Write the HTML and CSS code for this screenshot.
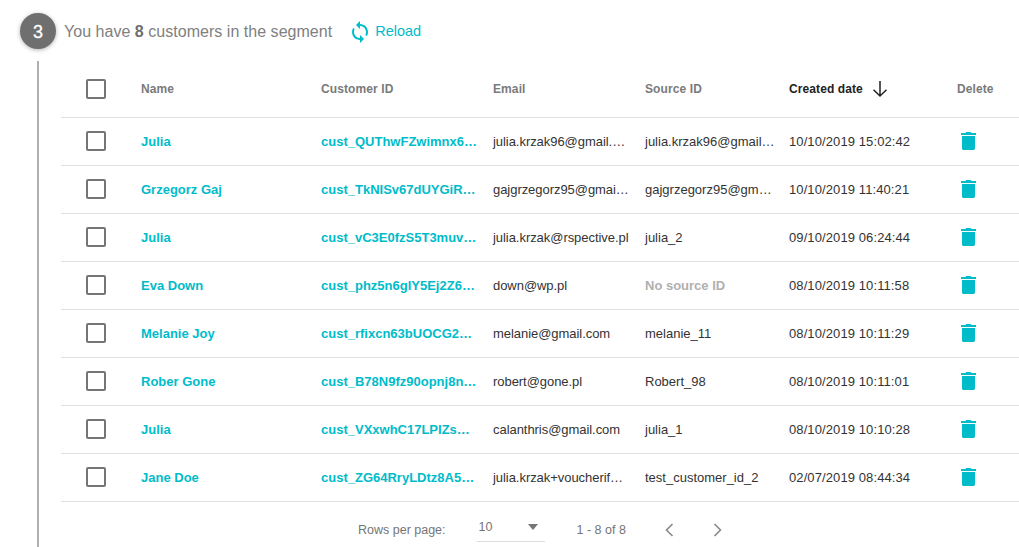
FILE: index.html
```html
<!DOCTYPE html>
<html lang="en">
<head>
    <meta charset="UTF-8">
    <title>Customers in the segment</title>
    <link rel="stylesheet" href="styles.css">
</head>
<body>
    <div class="step-header">
        <div class="step-number">3</div>
        <div class="step-title">You have <b>8</b> customers in the segment</div>
        <a class="reload">
            <svg width="24" height="24" viewBox="0 0 24 24"><path d="M12 4V1L8 5l4 4V6c3.31 0 6 2.69 6 6 0 1.010-.25 1.970-.7 2.800l1.460 1.460C19.540 15.030 20 13.570 20 12c0-4.420-3.580-8-8-8zm0 14c-3.310 0-6-2.690-6-6 0-1.010.25-1.970.7-2.800L5.240 7.740C4.460 8.970 4 10.430 4 12c0 4.420 3.580 8 8 8v3l4-4-4-4v3z"/></svg>
            Reload
        </a>
    </div>
    <div class="step-body">
        <table class="customers">
            <colgroup>
                <col class="col-check"><col class="col-name"><col class="col-id"><col class="col-email"><col class="col-source"><col class="col-date"><col class="col-delete">
            </colgroup>
            <thead>
                <tr>
                    <th class="check-cell"><span class="checkbox"></span></th>
                    <th>Name</th>
                    <th>Customer ID</th>
                    <th>Email</th>
                    <th>Source ID</th>
                    <th class="sorted">
                        <span class="sort-label">Created date
                            <svg width="18" height="18" viewBox="0 0 18 18"><path d="M9 1v15M2.500 9.700 9 16l6.500-6.300" fill="none" stroke="#222" stroke-width="1.500"/></svg>
                        </span>
                    </th>
                    <th>Delete</th>
                </tr>
            </thead>
            <tbody id="rows"></tbody>
        </table>
        <div class="pagination">
            <span class="rows-label">Rows per page:</span>
            <div class="rows-select"><span>10</span><i class="caret"></i></div>
            <span class="range">1 - 8 of 8</span>
            <svg class="page-arrow" width="12" height="14" viewBox="0 0 12 14"><path d="M8.500 1l-6 6 6 6" fill="none" stroke="#888" stroke-width="1.600"/></svg>
            <svg class="page-arrow next" width="12" height="14" viewBox="0 0 12 14"><path d="M3.500 1l6 6-6 6" fill="none" stroke="#888" stroke-width="1.600"/></svg>
        </div>
    </div>

    <script>
        const customers = [
            ['Julia', 'cust_QUThwFZwimnx6…', 'julia.krzak96@gmail.…', 'julia.krzak96@gmail…', '10/10/2019 15:02:42'],
            ['Grzegorz Gaj', 'cust_TkNISv67dUYGiR…', 'gajgrzegorz95@gmai…', 'gajgrzegorz95@gm…', '10/10/2019 11:40:21'],
            ['Julia', 'cust_vC3E0fzS5T3muv…', 'julia.krzak@rspective.pl', 'julia_2', '09/10/2019 06:24:44'],
            ['Eva Down', 'cust_phz5n6glY5Ej2Z6…', 'down@wp.pl', '', '08/10/2019 10:11:58'],
            ['Melanie Joy', 'cust_rfixcn63bUOCG2…', 'melanie@gmail.com', 'melanie_11', '08/10/2019 10:11:29'],
            ['Rober Gone', 'cust_B78N9fz90opnj8n…', 'robert@gone.pl', 'Robert_98', '08/10/2019 10:11:01'],
            ['Julia', 'cust_VXxwhC17LPIZs…', 'calanthris@gmail.com', 'julia_1', '08/10/2019 10:10:28'],
            ['Jane Doe', 'cust_ZG64RryLDtz8A5…', 'julia.krzak+voucherif…', 'test_customer_id_2', '02/07/2019 08:44:34']
        ];
        const trash = '<svg width="15" height="18" viewBox="0 0 15 18"><path d="M5 0h5l.5 1H15v2H0V1h4.500zM1 4h13v12.200c0 1-.8 1.800-1.800 1.800H2.800C1.800 18 1 17.200 1 16.200z"/></svg>';

        document.getElementById('rows').innerHTML = customers.map(function (c) {
            const source = c[3] ? c[3] : '<span class="no-source">No source ID</span>';
            return '<tr><td class="check-cell"><span class="checkbox"></span></td>' +
                '<td class="link">' + c[0] + '</td>' +
                '<td class="link">' + c[1] + '</td>' +
                '<td class="email">' + c[2] + '</td>' +
                '<td>' + source + '</td>' +
                '<td class="date">' + c[4] + '</td>' +
                '<td class="delete-cell">' + trash + '</td></tr>';
        }).join('');
    </script>
</body>
</html>
```

FILE: styles.css
```css
body {
    font-family: "Liberation Sans", Arial, sans-serif;
    margin: 0;
    background-color: #fff;
    color: #333;
    overflow: hidden;
}
.step-header {
    display: flex;
    align-items: center;
    height: 36px;
    padding: 13px 0 0 20px;
}
.step-number {
    width: 36px;
    height: 36px;
    border-radius: 50%;
    background-color: #6f6f6f;
    color: #fff;
    font-size: 18px;
    line-height: 38px;
    text-align: center;
    -webkit-text-stroke: 0.3px #fff;
    box-shadow: 0 1px 4px rgba(0,0,0,0.3);
}
.step-title {
    margin: 1px 0 0 8px;
    font-size: 16px;
    letter-spacing: 0.03px;
    color: #808080;
}
.step-title b {
    color: #6f6f6f;
}
.reload {
    display: flex;
    align-items: center;
    gap: 3px;
    margin-left: 16px;
    font-size: 14.5px;
    color: #00bcca;
}
.reload svg {
    margin-top: 2px;
    fill: #00bcca;
}
.step-body {
    margin: 12px 0 0 37px;
    padding-left: 22px;
    border-left: 2px solid #b0b0b0;
    height: 486px;
}
.customers {
    width: 958px;
    table-layout: fixed;
    border-collapse: collapse;
}
.col-check { width: 80px; }
.col-name { width: 180px; }
.col-id { width: 172px; }
.col-email { width: 152px; }
.col-source { width: 144px; }
.col-date { width: 168px; }
.col-delete { width: 62px; }
th, td {
    padding: 0;
    border-bottom: 1px solid #e0e0e0;
    font-size: 13px;
    text-align: left;
    white-space: nowrap;
}
thead tr {
    height: 56px;
}
th {
    font-size: 12px;
    letter-spacing: 0.1px;
    color: #7a7a7a;
}
tbody tr {
    height: 48px;
}
.sorted {
    color: #222;
}
.sort-label {
    display: flex;
    align-items: center;
    gap: 8px;
}
.check-cell {
    padding-left: 25px;
}
.checkbox {
    display: block;
    width: 16px;
    height: 16px;
    border: 2px solid #757575;
    border-radius: 2px;
}
.link {
    font-weight: bold;
    color: #00bcca;
}
.email {
    letter-spacing: -0.05px;
}
.date {
    letter-spacing: 0.1px;
}
.no-source {
    font-weight: bold;
    color: #b0b0b0;
}
.delete-cell svg {
    display: block;
    margin-left: 4px;
    fill: #00bcca;
}
.pagination {
    display: flex;
    align-items: center;
    height: 56px;
    padding-left: 297px;
    font-size: 12.5px;
    color: #757575;
}
.rows-select {
    display: flex;
    justify-content: space-between;
    width: 68px;
    height: 24px;
    margin-left: 31px;
    box-sizing: border-box;
    border-bottom: 1px solid #ddd;
}
.rows-select span {
    margin-left: 2px;
    padding-top: 1px;
    line-height: 16px;
}
.caret {
    width: 0;
    height: 0;
    margin: 6px 7px 0 0;
    border-left: 5px solid transparent;
    border-right: 5px solid transparent;
    border-top: 6px solid #757575;
}
.range {
    margin-left: 32px;
}
.page-arrow {
    margin-left: 38px;
}
.page-arrow.next {
    margin-left: 35px;
}
```
